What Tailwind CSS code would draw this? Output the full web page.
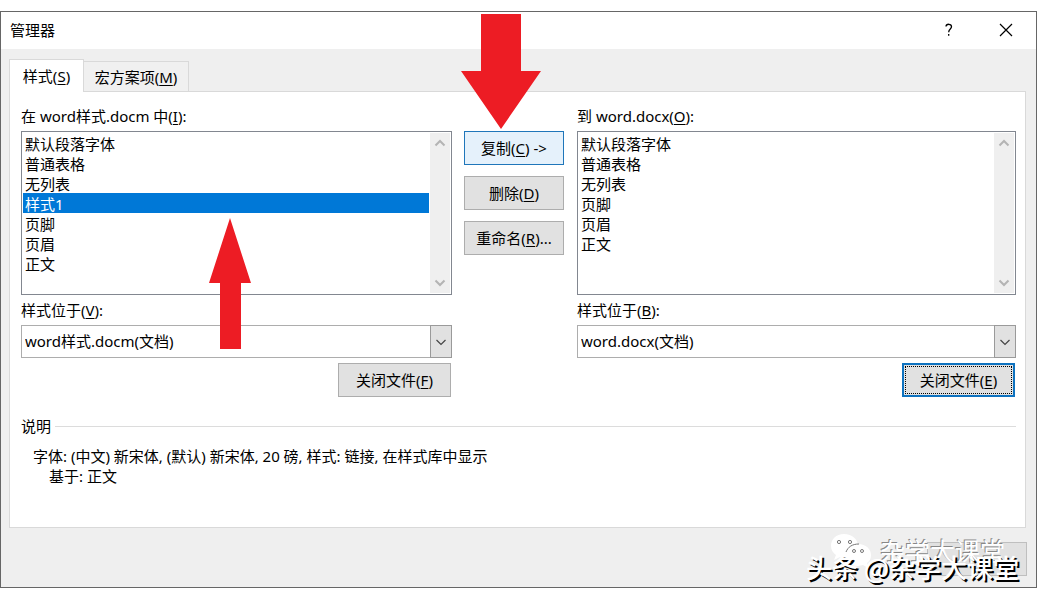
<!DOCTYPE html>
<html lang="zh-CN">
<head>
    <meta charset="UTF-8">
    <meta name="viewport" content="width=device-width, initial-scale=1.0">
    <title>管理器</title>
    <script src="https://cdn.jsdelivr.net/npm/@tailwindcss/browser@4"></script>
</head>
<body class="bg-white pt-[11px] font-['Noto_Sans','Noto_Sans_CJK_SC',sans-serif] text-[15px] leading-5 text-black">

    <div class="relative border border-[#666] bg-[#efefef]">
        <!-- Title bar -->
        <header class="flex h-[37px] items-center bg-white pr-px pb-px pl-[9px]">
            <h1 class="flex-1">管理器</h1>
            <button class="flex h-full w-[57px] items-center justify-center" aria-label="帮助">
                <svg class="h-4 w-4" viewBox="0 0 16 16" fill="none" stroke="#000" stroke-width="1.3"><path d="M5 4.5C5.2 1.5 10.5 1.5 10.5 4.7C10.5 7 7.7 7 7.7 10.2M7.7 12V13.7"/></svg>
            </button>
            <button class="flex h-full w-[58px] items-center justify-center" aria-label="关闭">
                <svg class="h-4 w-4" viewBox="0 0 16 16" fill="none" stroke="#000" stroke-width="1.2"><path d="M2 2L14 14M14 2L2 14"/></svg>
            </button>
        </header>

        <!-- Tabs -->
        <div class="flex items-end px-2 pt-[10px]" role="tablist">
            <button role="tab" aria-selected="true" class="relative z-10 -mb-px h-[33px] w-[75px] border border-b-0 border-[#d9d9d9] bg-white">样式(<u class="underline-offset-2">S</u>)</button>
            <button role="tab" aria-selected="false" class="h-[30px] w-[105px] border border-b-0 border-l-0 border-[#d9d9d9] bg-[#f0f0f0]">宏方案项(<u class="underline-offset-2">M</u>)</button>
        </div>

        <!-- Tab panel -->
        <main class="mr-[10px] ml-2 h-[437px] border border-[#d9d9d9] bg-white pt-[14px] pr-[9px] pl-[11px]">
            <div class="grid grid-cols-[431fr_101px_439fr] gap-3">
                <section>
                    <label for="from-list" class="block">在 word样式.docm 中(<u class="underline-offset-2">I</u>):</label>
                    <div class="mt-[5px] flex h-[164px] border border-[#828790] p-px">
                        <select id="from-list" size="8" class="min-w-0 flex-1 appearance-none overflow-hidden outline-none">
                            <option class="h-5 min-h-5 px-0.5 py-0 leading-[18px]">默认段落字体</option>
                            <option class="h-5 min-h-5 px-0.5 py-0 leading-[18px]">普通表格</option>
                            <option class="h-5 min-h-5 px-0.5 py-0 leading-[18px]">无列表</option>
                            <option selected class="h-5 min-h-5 bg-linear-to-r from-[#0078d7] to-[#0078d7] px-0.5 py-0 leading-[18px] [-webkit-text-fill-color:white]">样式1</option>
                            <option class="h-5 min-h-5 px-0.5 py-0 leading-[18px]">页脚</option>
                            <option class="h-5 min-h-5 px-0.5 py-0 leading-[18px]">页眉</option>
                            <option class="h-5 min-h-5 px-0.5 py-0 leading-[18px]">正文</option>
                        </select>
                        <div class="ml-px flex w-5 flex-col items-center justify-between bg-[#efefef] py-1">
                            <svg class="h-3 w-3" viewBox="0 0 12 12" fill="none" stroke="#b4b4b4" stroke-width="2"><path d="M1.500 8.500L6 4L10.500 8.500"/></svg>
                            <svg class="h-3 w-3" viewBox="0 0 12 12" fill="none" stroke="#b4b4b4" stroke-width="2"><path d="M1.500 3.500L6 8L10.500 3.500"/></svg>
                        </div>
                    </div>
                    <label for="from-file" class="mt-[5px] block">样式位于(<u class="underline-offset-2">V</u>):</label>
                    <div class="relative mt-[5px]">
                        <select id="from-file" class="block h-[33px] w-full appearance-none border border-[#adadad] bg-white pb-px pl-[3px]">
                            <option>word样式.docm(文档)</option>
                        </select>
                        <span class="pointer-events-none absolute inset-y-0 right-0 flex w-[22px] items-center justify-center border border-[#9a9a9a] bg-[#e1e1e1]">
                            <svg class="h-3 w-3" viewBox="0 0 12 12" fill="none" stroke="#444" stroke-width="1.2"><path d="M1.5 4L6 8.5L10.5 4"/></svg>
                        </span>
                    </div>
                    <button class="mt-[5px] mr-px ml-auto block h-[34px] w-[113px] border border-[#adadad] bg-[#e1e1e1]">关闭文件(<u class="underline-offset-2">F</u>)</button>
                </section>

                <div class="flex flex-col gap-[11px] pt-[25px] pr-px">
                    <button class="h-[34px] border border-[#1f76ba] bg-[#e5f1fb]">复制(<u class="underline-offset-2">C</u>) -&gt;</button>
                    <button class="h-[34px] border border-[#adadad] bg-[#e1e1e1]">删除(<u class="underline-offset-2">D</u>)</button>
                    <button class="h-[34px] border border-[#adadad] bg-[#e1e1e1]">重命名(<u class="underline-offset-2">R</u>)...</button>
                </div>

                <section>
                    <label for="to-list" class="block">到 word.docx(<u class="underline-offset-2">O</u>):</label>
                    <div class="mt-[5px] flex h-[164px] border border-[#828790] p-px">
                        <select id="to-list" size="8" class="min-w-0 flex-1 appearance-none overflow-hidden outline-none">
                            <option class="h-5 min-h-5 px-0.5 py-0 leading-[18px]">默认段落字体</option>
                            <option class="h-5 min-h-5 px-0.5 py-0 leading-[18px]">普通表格</option>
                            <option class="h-5 min-h-5 px-0.5 py-0 leading-[18px]">无列表</option>
                            <option class="h-5 min-h-5 px-0.5 py-0 leading-[18px]">页脚</option>
                            <option class="h-5 min-h-5 px-0.5 py-0 leading-[18px]">页眉</option>
                            <option class="h-5 min-h-5 px-0.5 py-0 leading-[18px]">正文</option>
                        </select>
                        <div class="ml-px flex w-5 flex-col items-center justify-between bg-[#efefef] py-1">
                            <svg class="h-3 w-3" viewBox="0 0 12 12" fill="none" stroke="#b4b4b4" stroke-width="2"><path d="M1.500 8.500L6 4L10.500 8.500"/></svg>
                            <svg class="h-3 w-3" viewBox="0 0 12 12" fill="none" stroke="#b4b4b4" stroke-width="2"><path d="M1.500 3.500L6 8L10.500 3.500"/></svg>
                        </div>
                    </div>
                    <label for="to-file" class="mt-[5px] block">样式位于(<u class="underline-offset-2">B</u>):</label>
                    <div class="relative mt-[5px]">
                        <select id="to-file" class="block h-[33px] w-full appearance-none border border-[#adadad] bg-white pb-px pl-[3px]">
                            <option>word.docx(文档)</option>
                        </select>
                        <span class="pointer-events-none absolute inset-y-0 right-0 flex w-[22px] items-center justify-center border border-[#9a9a9a] bg-[#e1e1e1]">
                            <svg class="h-3 w-3" viewBox="0 0 12 12" fill="none" stroke="#444" stroke-width="1.2"><path d="M1.5 4L6 8.5L10.5 4"/></svg>
                        </span>
                    </div>
                    <button class="mt-[5px] mr-px ml-auto block h-[34px] w-[113px] border-2 border-[#0f73c0] bg-[#e1e1e1] p-px">
                        <span class="flex h-full items-center justify-center border border-dotted border-black">关闭文件(<u class="underline-offset-2">E</u>)</span>
                    </button>
                </section>
            </div>

            <!-- Description -->
            <div class="mt-[19px] flex items-center gap-1">
                <h2>说明</h2>
                <hr class="flex-1 border-[#dcdcdc]">
            </div>
            <div class="mt-[10px] pl-3">
                <p>字体: (中文) 新宋体, (默认) 新宋体, 20 磅, 样式: 链接, 在样式库中显示</p>
                <p class="pl-4">基于: 正文</p>
            </div>
        </main>

        <footer class="flex justify-end pt-[14px] pr-[9px] pb-[11px]">
            <button class="h-[34px] w-[100px] border border-[#bfbfbf] bg-[#e1e1e1]" aria-label="关闭"></button>
        </footer>

        <!-- Arrows over the dialog -->
        <svg class="pointer-events-none absolute top-[2px] left-[460px] z-20 h-[115px] w-20" viewBox="0 0 80 115" fill="#ed1c24"><path d="M20 0H60V57H80L40 115L0 57H20Z"/></svg>
        <svg class="pointer-events-none absolute top-[206px] left-[208px] z-20 h-[131px] w-[42px]" viewBox="0 0 42 131" fill="#ed1c24"><path d="M21 0L42 65H32V131H11V65H0Z"/></svg>

        <!-- Watermarks -->
        <div class="pointer-events-none absolute right-[31px] bottom-[18px] z-20 flex items-center gap-2">
            <svg class="h-9 w-[42px]" viewBox="0 0 42 36">
                <path fill="#fff" d="M14 1C6 1 1 6 1 13C1 17 3 20 6 22L4 27L10 24C24 27 28 19 28 13C28 6 22 1 14 1Z"/>
                <path fill="#fff" d="M28 11C20 11 15 16 15 22C15 28 20 33 28 33L33 32L38 35L37 30C40 28 41 25 41 22C41 16 36 11 28 11Z"/>
                <g fill="none" stroke="#777"><path d="M16 19C18 14 22 11 29 11"/><circle cx="9" cy="9" r="1.6"/><circle cx="20" cy="9" r="1.6"/><circle cx="24" cy="18" r="1.5"/><circle cx="32" cy="18" r="1.5"/></g>
            </svg>
            <span class="text-[25px] leading-8 text-white [text-shadow:-1px_-1px_0_#888]">杂学大课堂</span>
        </div>
        <div class="pointer-events-none absolute right-[17px] bottom-1 z-30 font-['Noto_Sans_CJK_SC',sans-serif] text-[26px] leading-8 font-medium text-white [text-shadow:2px_2px_0_#000]">头条 @杂学大课堂</div>
    </div>

</body>
</html>
